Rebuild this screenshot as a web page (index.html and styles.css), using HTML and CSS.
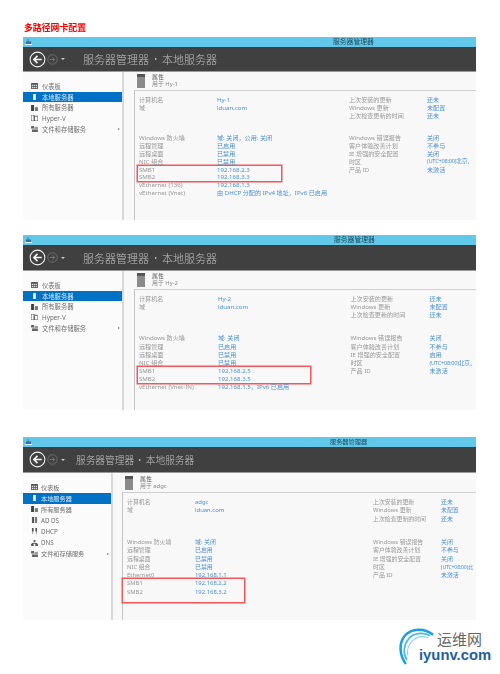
FILE: index.html
```html
<!DOCTYPE html>
<html lang="zh-CN">
<head>
<meta charset="utf-8">
<title>多路径网卡配置</title>
<link rel="stylesheet" href="styles.css">
</head>
<body>
<svg class="defs" aria-hidden="true">
  <symbol id="i-dash" viewBox="0 0 8 7"><path d="M0 0h8v7H0z" fill="#555"/><path d="M1 2h1.500v1.500H1zM3.200 2h1.500v1.500H3.200zM5.500 2H7v1.500H5.500zM1 4.500h1.500V6H1zM3.200 4.500h1.500V6H3.200zM5.500 4.500H7V6H5.500z" fill="#ddd"/></symbol>
  <symbol id="i-local" viewBox="0 0 8 7"><path d="M2.500 0h3v7h-3z" fill="currentColor"/></symbol>
  <symbol id="i-all" viewBox="0 0 8 7"><path d="M0 0h3.500v7H0z" fill="#444"/><path d="M4.500 2.500H8V7H4.500z" fill="#777"/></symbol>
  <symbol id="i-hyper" viewBox="0 0 8 7"><path d="M0 0h3.500v7H0zM4 1.500h4V7H4z" fill="none" stroke="#555" stroke-width="1"/></symbol>
  <symbol id="i-file" viewBox="0 0 8 7"><path d="M0 0h3.500v3H0z" fill="#666"/><path d="M4 1h4v2.500H4z" fill="#999"/><path d="M1 4h7v3H1z" fill="#666"/></symbol>
  <symbol id="i-adds" viewBox="0 0 8 7"><path d="M1 0h2.500v7H1z" fill="#555"/><path d="M4.500 0H7v7H4.500z" fill="#777"/></symbol>
  <symbol id="i-dhcp" viewBox="0 0 8 7"><path d="M1 0h2v4H1zM5 0h2v4H5zM1.700 4h.6v3h-.6zM5.700 4h.6v3h-.6z" fill="#555"/></symbol>
  <symbol id="i-dns" viewBox="0 0 8 7"><path d="M3 0h2v2.500H3zM0 4.500h3V7H0zM5 4.500h3V7H5zM1 3.500h6v1H1z" fill="#555"/></symbol>
  <symbol id="i-back" viewBox="0 0 18 18"><circle cx="9" cy="9" r="7.800" fill="none" stroke="#f2f2f2" stroke-width="1.100"/><path d="M13.500 9H6M9 5.200 5.200 9 9 12.800" fill="none" stroke="#f2f2f2" stroke-width="1.800"/></symbol>
  <symbol id="i-fwd" viewBox="0 0 12 12"><circle cx="6" cy="6" r="5.200" fill="none" stroke="#7b7b7b" stroke-width=".8"/><path d="M2.800 6h5.400M6 3.600 8.500 6 6 8.400" fill="none" stroke="#7b7b7b" stroke-width="1"/></symbol>
  <symbol id="i-app" viewBox="0 0 8 7"><path d="M3 0h1v3H3zM1 3h6v3H1z" fill="#3a6f9c"/><path d="M0 6h8v1H0z" fill="#fff"/></symbol>
</svg>

<h1 class="page-title">多路径网卡配置</h1>

<section class="win w1">
  <div class="titlebar"><svg class="app-icon"><use href="#i-app"/></svg><span class="title-text">服务器管理器</span></div>
  <div class="nav">
    <svg class="back"><use href="#i-back"/></svg><svg class="fwd"><use href="#i-fwd"/></svg><span class="drop"></span>
    <div class="crumb">服务器管理器<span class="sep"></span>本地服务器</div>
  </div>
  <div class="body">
    <aside class="side">
      <div class="item"><svg class="ico"><use href="#i-dash"/></svg>仪表板</div>
      <div class="item sel"><svg class="ico"><use href="#i-local"/></svg>本地服务器</div>
      <div class="item"><svg class="ico"><use href="#i-all"/></svg>所有服务器</div>
      <div class="item"><svg class="ico"><use href="#i-hyper"/></svg>Hyper-V</div>
      <div class="item"><svg class="ico"><use href="#i-file"/></svg>文件和存储服务<span class="more"></span></div>
    </aside>
    <main class="main">
      <header class="head"><span class="srv"></span><div class="head-text"><div class="h-name">属性</div><div class="h-sub">用于 Hy-1</div></div></header>
      <div class="panel">
        <div class="col col-l">
          <div class="group top">
            <div class="row"><span>计算机名</span><a>Hy-1</a></div>
            <div class="row"><span>域</span><a>lduan.com</a></div>
          </div>
          <div class="group">
            <div class="row"><span>Windows 防火墙</span><a>域: 关闭，公用: 关闭</a></div>
            <div class="row"><span>远程管理</span><a>已启用</a></div>
            <div class="row"><span>远程桌面</span><a>已禁用</a></div>
            <div class="row"><span>NIC 组合</span><a>已禁用</a></div>
            <div class="smb">
              <div class="row"><span>SMB1</span><a>192.168.2.3</a></div>
              <div class="row"><span>SMB2</span><a>192.168.3.3</a></div>
            </div>
            <div class="row"><span>vEthernet (136)</span><a>192.168.1.3</a></div>
            <div class="row"><span>vEthernet (Vnet)</span><a>由 DHCP 分配的 IPv4 地址，IPv6 已启用</a></div>
          </div>
        </div>
        <div class="col">
          <div class="group top">
            <div class="row"><span>上次安装的更新</span><a>还未</a></div>
            <div class="row"><span>Windows 更新</span><a>未配置</a></div>
            <div class="row"><span>上次检查更新的时间</span><a>还未</a></div>
          </div>
          <div class="group">
            <div class="row"><span>Windows 错误报告</span><a>关闭</a></div>
            <div class="row"><span>客户体验改善计划</span><a>不参与</a></div>
            <div class="row"><span>IE 增强的安全配置</span><a>关闭</a></div>
            <div class="row"><span>时区</span><a class="tz">(UTC+08:00)北京，</a></div>
            <div class="row"><span>产品 ID</span><a>未激活</a></div>
          </div>
        </div>
      </div>
    </main>
  </div>
</section>

<section class="win w2">
  <div class="titlebar"><svg class="app-icon"><use href="#i-app"/></svg><span class="title-text">服务器管理器</span></div>
  <div class="nav">
    <svg class="back"><use href="#i-back"/></svg><svg class="fwd"><use href="#i-fwd"/></svg><span class="drop"></span>
    <div class="crumb">服务器管理器<span class="sep"></span>本地服务器</div>
  </div>
  <div class="body">
    <aside class="side">
      <div class="item"><svg class="ico"><use href="#i-dash"/></svg>仪表板</div>
      <div class="item sel"><svg class="ico"><use href="#i-local"/></svg>本地服务器</div>
      <div class="item"><svg class="ico"><use href="#i-all"/></svg>所有服务器</div>
      <div class="item"><svg class="ico"><use href="#i-hyper"/></svg>Hyper-V</div>
      <div class="item"><svg class="ico"><use href="#i-file"/></svg>文件和存储服务<span class="more"></span></div>
    </aside>
    <main class="main">
      <header class="head"><span class="srv"></span><div class="head-text"><div class="h-name">属性</div><div class="h-sub">用于 Hy-2</div></div></header>
      <div class="panel">
        <div class="col col-l">
          <div class="group top">
            <div class="row"><span>计算机名</span><a>Hy-2</a></div>
            <div class="row"><span>域</span><a>lduan.com</a></div>
          </div>
          <div class="group">
            <div class="row"><span>Windows 防火墙</span><a>域: 关闭</a></div>
            <div class="row"><span>远程管理</span><a>已启用</a></div>
            <div class="row"><span>远程桌面</span><a>已禁用</a></div>
            <div class="row"><span>NIC 组合</span><a>已禁用</a></div>
            <div class="smb">
              <div class="row"><span>SMB1</span><a>192.168.2.5</a></div>
              <div class="row"><span>SMB2</span><a>192.168.3.5</a></div>
            </div>
            <div class="row"><span>vEthernet (Vnet-IN)</span><a>192.168.1.5，IPv6 已启用</a></div>
          </div>
        </div>
        <div class="col">
          <div class="group top">
            <div class="row"><span>上次安装的更新</span><a>还未</a></div>
            <div class="row"><span>Windows 更新</span><a>未配置</a></div>
            <div class="row"><span>上次检查更新的时间</span><a>还未</a></div>
          </div>
          <div class="group">
            <div class="row"><span>Windows 错误报告</span><a>关闭</a></div>
            <div class="row"><span>客户体验改善计划</span><a>不参与</a></div>
            <div class="row"><span>IE 增强的安全配置</span><a>启用</a></div>
            <div class="row"><span>时区</span><a class="tz">(UTC+08:00)北京，</a></div>
            <div class="row"><span>产品 ID</span><a>未激活</a></div>
          </div>
        </div>
      </div>
    </main>
  </div>
</section>

<section class="win w3">
  <div class="titlebar"><svg class="app-icon"><use href="#i-app"/></svg><span class="title-text">服务器管理器</span></div>
  <div class="nav">
    <svg class="back"><use href="#i-back"/></svg><svg class="fwd"><use href="#i-fwd"/></svg><span class="drop"></span>
    <div class="crumb">服务器管理器<span class="sep"></span>本地服务器</div>
  </div>
  <div class="body">
    <aside class="side">
      <div class="item"><svg class="ico"><use href="#i-dash"/></svg>仪表板</div>
      <div class="item sel"><svg class="ico"><use href="#i-local"/></svg>本地服务器</div>
      <div class="item"><svg class="ico"><use href="#i-all"/></svg>所有服务器</div>
      <div class="item"><svg class="ico"><use href="#i-adds"/></svg>AD DS</div>
      <div class="item"><svg class="ico"><use href="#i-dhcp"/></svg>DHCP</div>
      <div class="item"><svg class="ico"><use href="#i-dns"/></svg>DNS</div>
      <div class="item"><svg class="ico"><use href="#i-file"/></svg>文件和存储服务<span class="more"></span></div>
    </aside>
    <main class="main">
      <header class="head"><span class="srv"></span><div class="head-text"><div class="h-name">属性</div><div class="h-sub">用于 adgc</div></div></header>
      <div class="panel">
        <div class="col col-l">
          <div class="group top">
            <div class="row"><span>计算机名</span><a>adgc</a></div>
            <div class="row"><span>域</span><a>lduan.com</a></div>
          </div>
          <div class="group">
            <div class="row"><span>Windows 防火墙</span><a>域: 关闭</a></div>
            <div class="row"><span>远程管理</span><a>已启用</a></div>
            <div class="row"><span>远程桌面</span><a>已禁用</a></div>
            <div class="row"><span>NIC 组合</span><a>已禁用</a></div>
            <div class="row"><span>Ethernet0</span><a>192.168.1.1</a></div>
            <div class="smb">
              <div class="row"><span>SMB1</span><a>192.168.2.2</a></div>
              <div class="row"><span>SMB2</span><a>192.168.3.2</a></div>
            </div>
          </div>
        </div>
        <div class="col">
          <div class="group top">
            <div class="row"><span>上次安装的更新</span><a>还未</a></div>
            <div class="row"><span>Windows 更新</span><a>未配置</a></div>
            <div class="row"><span>上次检查更新的时间</span><a>还未</a></div>
          </div>
          <div class="group">
            <div class="row"><span>Windows 错误报告</span><a>关闭</a></div>
            <div class="row"><span>客户体验改善计划</span><a>不参与</a></div>
            <div class="row"><span>IE 增强的安全配置</span><a>关闭</a></div>
            <div class="row"><span>时区</span><a class="tz">(UTC+08:00)北</a></div>
            <div class="row"><span>产品 ID</span><a>未激活</a></div>
          </div>
        </div>
      </div>
    </main>
  </div>
</section>

<footer class="logo">
  <svg class="logo-arc" viewBox="0 0 40 40" fill="none">
    <path d="M36 8C27 1 14 1 7 9 1 16 1 28 8 38" stroke="#1b9fe0" stroke-width="2.600"/>
    <path d="M33 9C25 5 16 6 11 12 6 18 5 26 9 34" stroke="#4db8ea" stroke-width="1.800"/>
    <path d="M31 11C25 9 19 10 15 14 11 18 9 24 10 29" stroke="#8ed4f3" stroke-width="1.200"/>
  </svg>
  <div class="logo-text">
    <div class="logo-cn">运维网</div>
    <div class="logo-en">iyunv.com</div>
  </div>
</footer>
</body>
</html>
```

FILE: styles.css
```css
* { box-sizing: border-box; }
html, body { margin: 0; height: 674px; overflow: hidden; background: #fff; }
body {
  font-family: "Noto Sans", "Noto Sans CJK SC", sans-serif;
  color: #666;
}
.defs { width: 0; height: 0; display: block; }

.page-title {
  margin: 0;
  height: 37px;
  padding: 23px 0 0 24px;
  font: bold 8.900px/11px "Liberation Serif", "Noto Sans CJK SC", serif;
  color: #f00;
  filter: blur(.2px);
}

.win {
  --row: 7.850px;
  --gap: 14.700px;
  --side: 99px;
  --label: 78px;
  --col-l: 210px;
  --fs: 6.100px;
  --item: 10.700px;
  --item-fs: 6.300px;
  --crumb: 11px;
  --crumb-x: 18px;
  --title-x: 308px;
  --title-fs: 6.800px;
  --pad: 10px;
  --nav: 25px;
  --head: 18px;
  --box: 143px;
  --box-left: 1px;
  --box-extra: 0px;
  --side-top: 9px;
  --icon-gap: 4px;
  width: 453px;
  margin-left: 23px;
  display: flex;
  flex-direction: column;
  background: #f8f8f8;
  overflow: hidden;
  filter: blur(.4px);
}
.w1 { height: 183px; }
.w2 {
  height: 175px;
  margin-top: 15px;
  --row: 8.100px;
  --gap: 15.200px;
  --box: 172px;
  --nav: 26px;
  --col-l: 211.500px;
  --label: 79px;
  --title-x: 309px;
  --crumb-x: 18px;
}
.w3 {
  height: 183px;
  margin-top: 27px;
  --side: 88px;
  --pad: 9px;
  --row: 8.250px;
  --gap: 15.300px;
  --col-l: 246px;
  --label: 68px;
  --fs: 5.900px;
  --item-fs: 6.200px;
  --item: 11.100px;
  --crumb: 9.700px;
  --crumb-x: 11px;
  --title-x: 305px;
  --title-fs: 6.200px;
  --box: 121px;
  --box-left: 4px;
  --box-extra: 6px;
  --nav: 26px;
  --head: 19px;
  --side-top: 8.500px;
  --icon-gap: 3px;
}

.titlebar {
  flex: none;
  height: 10px;
  background: #62c8ea;
  display: flex;
  align-items: center;
  padding-left: 2px;
}
.app-icon { width: 7px; height: 6px; flex: none; }
.title-text {
  margin-left: calc(var(--title-x) - 7px);
  font-size: var(--title-fs);
  line-height: 10px;
  color: #1d4a5c;
}

.nav {
  flex: none;
  height: var(--nav);
  background: #404040;
  border-bottom: 1px solid #999;
  display: flex;
  align-items: center;
  padding-left: 6px;
}
.back { width: 17px; height: 17px; flex: none; }
.fwd { width: 11px; height: 11px; flex: none; margin-left: 1px; }
.drop {
  margin-left: 3px;
  border: 2px solid transparent;
  border-top: 2px solid #ccc;
  border-bottom: 0;
}
.crumb {
  margin-left: var(--crumb-x);
  font-size: var(--crumb);
  font-weight: 300;
  color: #c0c0c0;
  white-space: nowrap;
  display: flex;
  align-items: center;
}
.sep {
  margin: 0 calc(var(--crumb) * .5);
  border-left: 2px solid #ddd;
  border-top: 1.500px solid transparent;
  border-bottom: 1.500px solid transparent;
}

.body { flex: 1; display: flex; min-height: 0; }
.side {
  flex: none;
  width: var(--side);
  padding-top: var(--side-top);
  background: #fbfbfb;
  font-size: var(--item-fs);
}
.item {
  height: var(--item);
  display: flex;
  align-items: center;
  padding-left: 8px;
  white-space: nowrap;
  color: #6e6e6e;
}
.ico { width: 7px; height: 6px; flex: none; margin-right: var(--icon-gap); color: #666; }
.item.sel { background: #0072c6; color: #dbe9f5; }
.item.sel .ico { color: #fff; }
.more {
  margin-left: auto;
  margin-right: 2px;
  border-left: 2px solid #777;
  border-top: 1.500px solid transparent;
  border-bottom: 1.500px solid transparent;
}

.main {
  flex: 1;
  min-width: 0;
  border-left: 2px solid #d8d8d8;
  padding-left: var(--pad);
  display: flex;
  flex-direction: column;
}
.head {
  flex: none;
  height: var(--head);
  display: flex;
  align-items: center;
  gap: 7px;
  padding-left: 3px;
}
.srv { width: 8px; height: 14px; background: linear-gradient(#555 0 25%, #8a8a8a 25%); flex: none; }
.head-text { line-height: 7px; font-size: 5.900px; }
.h-name { color: #555; }
.h-sub { color: #888; }

.panel {
  flex: 1;
  min-height: 0;
  border-top: 1.500px solid #cfcfcf;
  border-left: 1px solid #c4c4c4;
  padding: 5px 0 0 4px;
  display: flex;
  font-size: var(--fs);
}
.col { flex: none; }
.col-l { width: var(--col-l); }
.group.top { height: calc(var(--row) * 3); margin-bottom: var(--gap); }
.row {
  height: var(--row);
  line-height: var(--row);
  display: flex;
  white-space: nowrap;
}
.row span { flex: none; width: var(--label); color: #979797; }
.row a { color: #4a90d0; }
.row a.tz { font-size: 5.700px; letter-spacing: -.25px; }
.w3 .row a.tz { font-size: 5.100px; letter-spacing: -.15px; }
.smb {
  width: var(--box);
  margin-left: calc(var(--box-left) * -1);
  padding-left: var(--box-left);
  padding-bottom: var(--box-extra);
  box-shadow: 0 0 0 1.500px #f4565a;
}

.logo {
  height: 54px;
  padding: 6px 0 0 398px;
  display: flex;
  position: relative;
}
.logo-arc { width: 39px; height: 39px; position: absolute; left: 398px; top: 7px; }
.logo-text { margin-left: 21px; padding-top: 4px; position: relative; }
.logo-cn {
  padding-left: 18px;
  font: 15px/17px "Noto Sans CJK SC", sans-serif;
  color: #666;
}
.logo-en {
  font: bold 14.800px/16px "Liberation Sans", sans-serif;
  color: #1f5f9e;
}
```
